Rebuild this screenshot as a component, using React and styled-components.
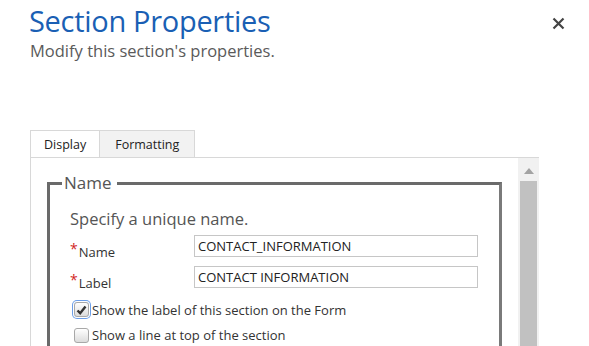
import React from 'react';
import styled, { createGlobalStyle } from 'styled-components';

const GlobalStyle = createGlobalStyle`
  html, body {
    margin: 0;
    padding: 0;
    overflow: hidden;
    background: #ffffff;
    font-family: "Open Sans", "Noto Sans", sans-serif;
  }
`;

const Dialog = styled.div`
  width: 589px;
  height: 346px;
  overflow: hidden;
  padding: 0 0 0 30px;
  box-sizing: border-box;
`;

const Header = styled.header`
  display: flex;
  justify-content: space-between;
  align-items: flex-start;
  padding-right: 24px;
`;

const TitleBlock = styled.div`
  display: flex;
  flex-direction: column;
`;

const Title = styled.h1`
  margin: 1px 0 0 -1px;
  font-size: 29px;
  font-weight: 400;
  line-height: 40px;
  color: #1a5fb4;
  letter-spacing: -0.3px;
`;

const Subtitle = styled.p`
  margin: -1px 0 0 0;
  font-size: 16.5px;
  line-height: 22px;
  color: #5a5a5a;
`;

const CloseButton = styled.button`
  margin-top: 17px;
  padding: 0;
  border: none;
  background: none;
  width: 14px;
  height: 14px;
  cursor: pointer;
`;

const Tabs = styled.div`
  display: flex;
  margin-top: 68px;
`;

const Tab = styled.div`
  height: 26px;
  padding: 0 ${(p) => p.$pad}px;
  display: flex;
  align-items: center;
  font-size: 12.5px;
  color: #222;
  border: 1px solid #d8d8d8;
  border-bottom: none;
  border-left: ${(p) => (p.$first ? '1px solid #d8d8d8' : 'none')};
  background: ${(p) => (p.$active ? '#ffffff' : '#f2f2f2')};
  margin-bottom: ${(p) => (p.$active ? '-1px' : '0')};
`;

const Panel = styled.div`
  display: flex;
  width: 509px;
  height: 240px;
  border-top: 1px solid #d8d8d8;
  border-left: 1px solid #d8d8d8;
  box-sizing: border-box;
`;

const PanelBody = styled.div`
  flex: 1;
  min-width: 0;
  padding: 14px 16px 0 16px;
`;

const ScrollBar = styled.div`
  width: 21px;
  flex-shrink: 0;
  background: #f1f1f1;
  display: flex;
  flex-direction: column;
  align-items: center;
`;

const ScrollArrow = styled.div`
  margin-top: 10px;
  width: 0;
  height: 0;
  border-left: 5px solid transparent;
  border-right: 5px solid transparent;
  border-bottom: 6px solid #a3a3a3;
`;

const ScrollThumb = styled.div`
  margin-top: 7px;
  width: 17px;
  flex: 1;
  background: #c1c1c1;
`;

const Fieldset = styled.fieldset`
  margin: 0;
  padding: 14px 18px 0 20px;
  height: 300px;
  border: 3px solid #6e6e6e;
  border-color: #6a6a6a #7a7a7a #7a7a7a #6a6a6a;
`;

const Legend = styled.legend`
  font-size: 17px;
  color: #555;
  padding: 0 5px 0 2px;
  margin-left: -8px;
  line-height: 22px;
`;

const Hint = styled.p`
  margin: 0 0 5px 0;
  font-size: 16.5px;
  color: #555;
  line-height: 22px;
`;

const FieldRow = styled.div`
  display: flex;
  align-items: flex-start;
  height: 22px;
  margin-bottom: 9px;
`;

const FieldLabel = styled.label`
  width: 124px;
  display: flex;
  align-items: flex-start;
  font-size: 13px;
  line-height: 18px;
  color: #333;
  padding-top: 8px;
`;

const Required = styled.span`
  color: #d11f1f;
  font-size: 14px;
  line-height: 12px;
  margin-right: 1px;
`;

const TextInput = styled.input`
  width: 284px;
  height: 22px;
  box-sizing: border-box;
  border: 1px solid #c6c6c6;
  padding: 0 3px;
  font-family: inherit;
  font-size: 13px;
  color: #222;
  outline: none;
`;

const CheckRow = styled.label`
  display: flex;
  align-items: center;
  margin: ${(p) => (p.$first ? '12px' : '7px')} 0 0 ${(p) => (p.$focus ? '2px' : '4px')};
  font-size: 13px;
  color: #333;
  gap: ${(p) => (p.$focus ? '1px' : '3px')};
`;

const CheckBox = styled.span`
  width: 13px;
  height: 13px;
  border-radius: 3px;
  border: 1px solid #a8a8a8;
  background: linear-gradient(#ffffff, #dcdcdc);
  display: flex;
  align-items: center;
  justify-content: center;
  box-shadow: ${(p) => (p.$focus ? '0 0 0 1px #fff, 0 0 0 2px #6b9ee8' : 'none')};
  margin: ${(p) => (p.$focus ? '2px' : '0')};
`;

function CheckMark() {
  return (
    <svg width="11" height="10" viewBox="0 0 11 10">
      <path d="M1.5 5.5 L4.2 8.2 L9.5 1.5" fill="none" stroke="#333" strokeWidth="2.4" />
    </svg>
  );
}

function App() {
  return (
    <Dialog>
      <GlobalStyle />
      <Header>
        <TitleBlock>
          <Title>Section Properties</Title>
          <Subtitle>Modify this section's properties.</Subtitle>
        </TitleBlock>
        <CloseButton aria-label="Close">
          <svg width="13" height="13" viewBox="0 0 13 13">
            <path d="M1.5 1.5 L11.5 11.5 M11.5 1.5 L1.5 11.5" stroke="#444" strokeWidth="2.2" />
          </svg>
        </CloseButton>
      </Header>
      <Tabs>
        <Tab $first $active $pad={13}>Display</Tab>
        <Tab $pad={15}>Formatting</Tab>
      </Tabs>
      <Panel>
        <PanelBody>
          <Fieldset>
            <Legend>Name</Legend>
            <Hint>Specify a unique name.</Hint>
            <FieldRow>
              <FieldLabel><Required>*</Required>Name</FieldLabel>
              <TextInput defaultValue="CONTACT_INFORMATION" />
            </FieldRow>
            <FieldRow>
              <FieldLabel><Required>*</Required>Label</FieldLabel>
              <TextInput defaultValue="CONTACT INFORMATION" />
            </FieldRow>
            <CheckRow $first $focus>
              <CheckBox $focus><CheckMark /></CheckBox>
              Show the label of this section on the Form
            </CheckRow>
            <CheckRow>
              <CheckBox />
              Show a line at top of the section
            </CheckRow>
          </Fieldset>
        </PanelBody>
        <ScrollBar>
          <ScrollArrow />
          <ScrollThumb />
        </ScrollBar>
      </Panel>
    </Dialog>
  );
}

export default App;
